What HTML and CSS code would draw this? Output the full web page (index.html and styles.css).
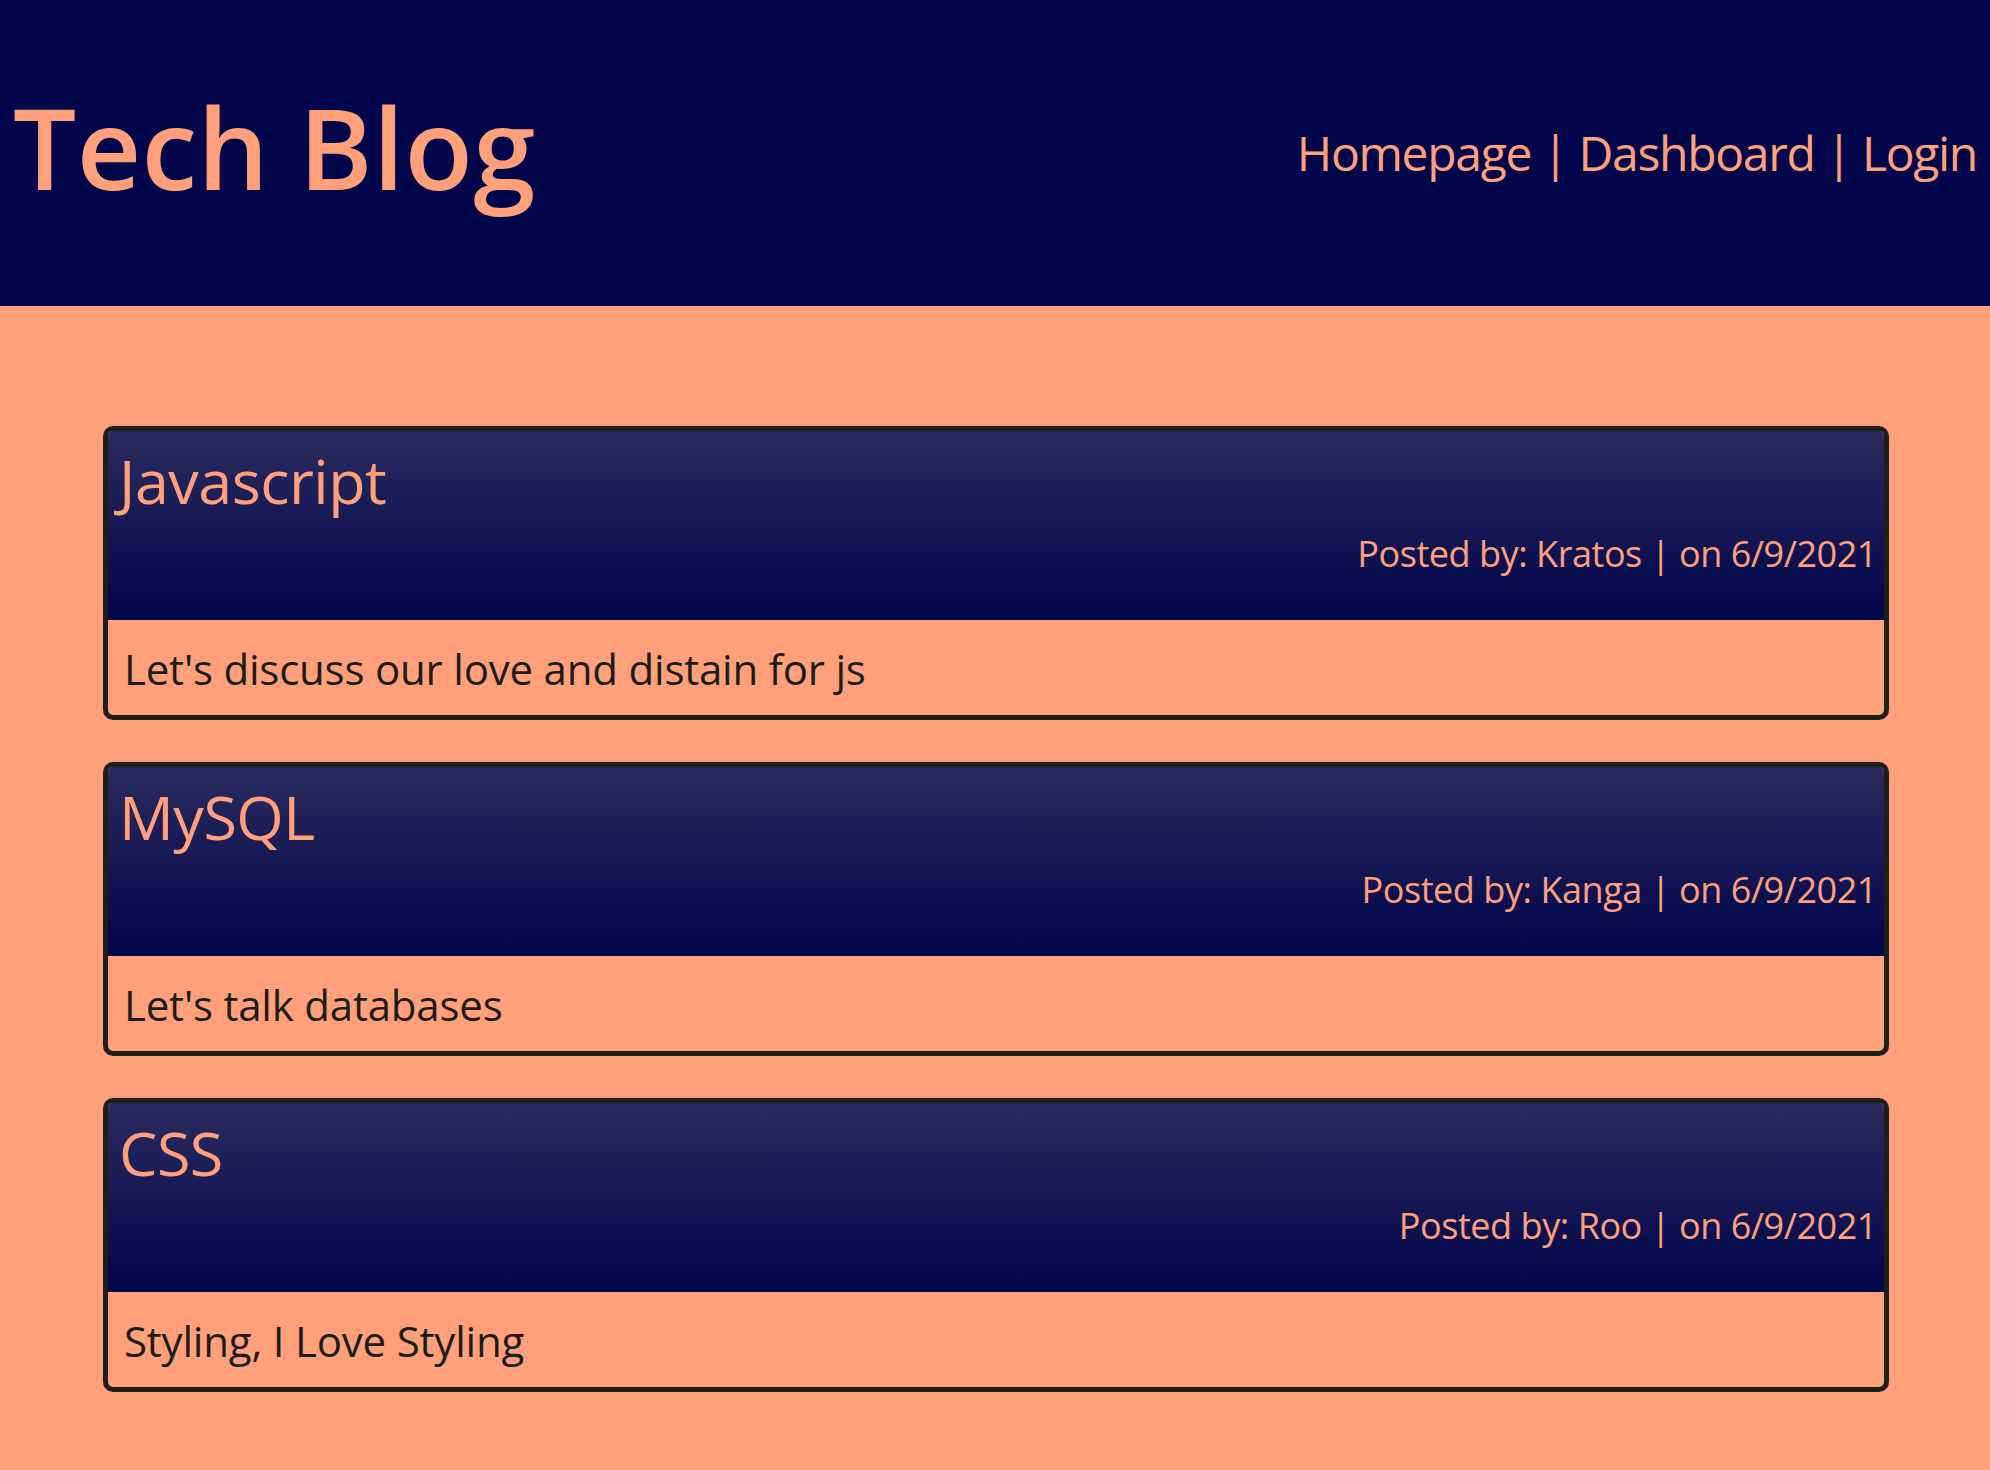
FILE: index.html
```html
<!DOCTYPE html>
<html lang="en">
<head>
<meta charset="utf-8">
<title>Tech Blog</title>
<link rel="stylesheet" href="styles.css">
</head>
<body>
<header class="site-header">
  <h1 class="site-title">Tech Blog</h1>
  <nav class="site-nav">
    <a href="#" class="nav-link">Homepage</a> | <a href="#" class="nav-link">Dashboard</a> | <a href="#" class="nav-link">Login</a>
  </nav>
</header>
<main class="posts">
  <article class="post">
    <div class="post-head">
      <h2 class="post-title">Javascript</h2>
      <p class="post-meta">Posted by: Kratos | on 6/9/2021</p>
    </div>
    <div class="post-body">Let's discuss our love and distain for js</div>
  </article>
  <article class="post">
    <div class="post-head">
      <h2 class="post-title">MySQL</h2>
      <p class="post-meta">Posted by: Kanga | on 6/9/2021</p>
    </div>
    <div class="post-body">Let's talk databases</div>
  </article>
  <article class="post">
    <div class="post-head">
      <h2 class="post-title">CSS</h2>
      <p class="post-meta">Posted by: Roo | on 6/9/2021</p>
    </div>
    <div class="post-body">Styling, I Love Styling</div>
  </article>
</main>
</body>
</html>
```

FILE: styles.css
```css
* { box-sizing: border-box; }

html, body {
  margin: 0;
  padding: 0;
}

body {
  background: #ffa07a;
  font-family: "Open Sans", "Noto Sans", sans-serif;
  color: #ffa07a;
  min-height: 1470px;
}

.site-header {
  background: #02064a;
  height: 306px;
  display: flex;
  justify-content: space-between;
  align-items: center;
  padding: 0 13px 0 13px;
}

.site-title {
  margin: 0 0 12px 0;
  font-size: 112px;
  line-height: 1.2;
  font-weight: 600;
  letter-spacing: 0.4px;
}

.site-nav {
  font-size: 48px;
  line-height: 1.2;
  letter-spacing: -1.3px;
}

.nav-link {
  color: #ffa07a;
  text-decoration: none;
}

.posts {
  padding: 120px 101px 0 103px;
  display: flex;
  flex-direction: column;
  gap: 42px;
}

.post {
  border: 5px solid #1e1e1e;
  border-radius: 10px;
  overflow: hidden;
}

.post-head {
  background: linear-gradient(to bottom, #2a2b5f, #02064a);
  height: 189px;
  padding: 14px 7px 0 11px;
}

.post-title {
  margin: 0;
  font-size: 61px;
  line-height: 72px;
  font-weight: 400;
  letter-spacing: -0.5px;
}

.post-meta {
  margin: 15px 0 0 0;
  text-align: right;
  font-size: 36px;
  line-height: 43px;
  letter-spacing: -0.45px;
}

.post-body {
  color: #1c1c1c;
  font-size: 42px;
  line-height: 50px;
  padding: 24px 15px 21px 16px;
  letter-spacing: -0.2px;
}
```
